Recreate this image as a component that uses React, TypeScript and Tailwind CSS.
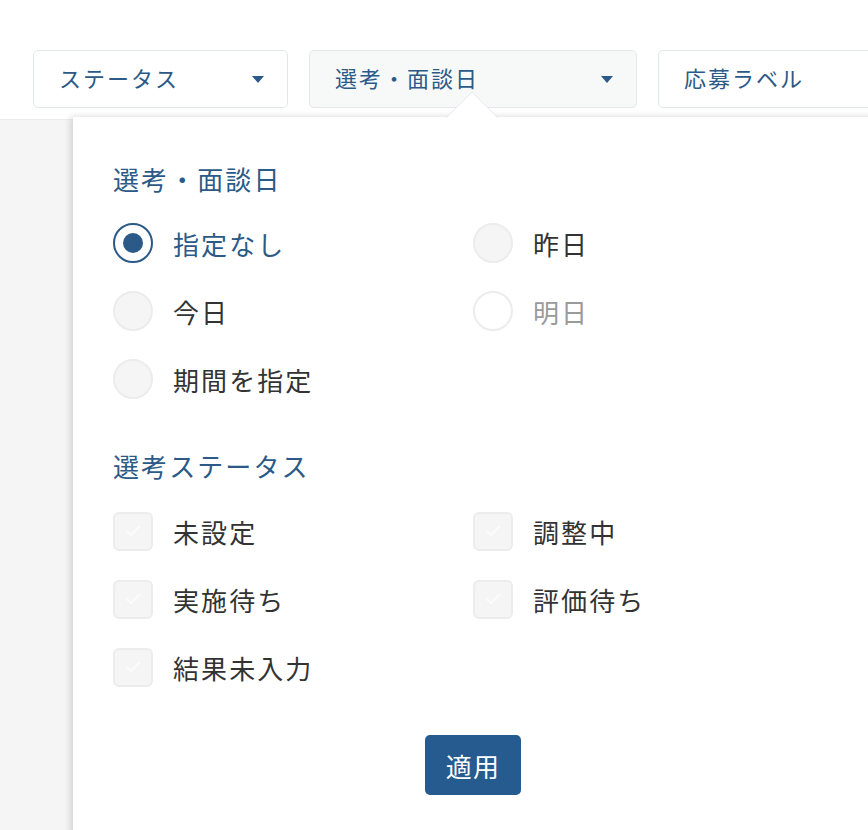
import { useState } from "react";

const FONT = { fontFamily: '"Noto Sans CJK JP", "Noto Sans", sans-serif' };

type Opt = { id: string; label: string; disabled?: boolean };

const dateOptions: Opt[] = [
  { id: "none", label: "指定なし" },
  { id: "yesterday", label: "昨日" },
  { id: "today", label: "今日" },
  { id: "tomorrow", label: "明日", disabled: true },
  { id: "range", label: "期間を指定" },
];

const statusOptions: Opt[] = [
  { id: "unset", label: "未設定" },
  { id: "adjusting", label: "調整中" },
  { id: "waiting", label: "実施待ち" },
  { id: "evaluating", label: "評価待ち" },
  { id: "noresult", label: "結果未入力" },
];

function Caret() {
  return (
    <svg width="12" height="7" viewBox="0 0 12 7" className="shrink-0">
      <polygon points="0,0 12,0 6,7" fill="#2b5a88" />
    </svg>
  );
}

function FilterButton({
  label,
  width,
  active,
  caret = true,
}: {
  label: string;
  width: string;
  active?: boolean;
  caret?: boolean;
}) {
  return (
    <button
      type="button"
      className={`flex h-[58px] shrink-0 items-center justify-between rounded-[5px] border border-[#e2e8ea] pb-[3px] pl-[25px] pr-[23px] text-[22px] tracking-[0.09em] text-[#2b5a88] ${width} ${
        active ? "bg-[#f7f8f8]" : "bg-white"
      }`}
    >
      <span>{label}</span>
      {caret && (
        <span className="pt-[3px]">
          <Caret />
        </span>
      )}
    </button>
  );
}

function Radio({
  opt,
  checked,
  onSelect,
}: {
  opt: Opt;
  checked: boolean;
  onSelect: () => void;
}) {
  const ring = checked
    ? "border-2 border-[#2b5a88] bg-white"
    : opt.disabled
    ? "border-2 border-[#ececec] bg-white"
    : "border-2 border-[#ececec] bg-[#f5f5f5]";
  const text = checked
    ? "text-[#2b5a88]"
    : opt.disabled
    ? "text-[#9a9a9a]"
    : "text-[#333333]";
  return (
    <label
      className="flex h-[40px] cursor-pointer items-center gap-[20px]"
      onClick={() => !opt.disabled && onSelect()}
    >
      <span
        className={`flex h-[40px] w-[40px] shrink-0 items-center justify-center rounded-full ${ring}`}
      >
        {checked && <span className="h-[20px] w-[20px] rounded-full bg-[#2b5a88]" />}
      </span>
      <span className={`text-[26px] tracking-[0.08em] ${text}`}>{opt.label}</span>
    </label>
  );
}

function Checkbox({
  opt,
  checked,
  onToggle,
}: {
  opt: Opt;
  checked: boolean;
  onToggle: () => void;
}) {
  return (
    <label className="flex h-[40px] cursor-pointer items-center gap-[20px]" onClick={onToggle}>
      <span
        className={`flex h-[39px] w-[40px] shrink-0 items-center justify-center rounded-[6px] border-2 ${
          checked ? "border-[#2b5a88] bg-[#2b5a88]" : "border-[#ececec] bg-[#f5f5f5]"
        }`}
      >
        <svg width="16" height="12" viewBox="0 0 16 12">
          <path
            d="M2 6.5 L6 10 L14 2"
            fill="none"
            stroke={checked ? "#ffffff" : "#fbfbfb"}
            strokeWidth="2.2"
            strokeLinecap="round"
            strokeLinejoin="round"
          />
        </svg>
      </span>
      <span className="text-[26px] tracking-[0.08em] text-[#333333]">{opt.label}</span>
    </label>
  );
}

export default function App() {
  const [date, setDate] = useState("none");
  const [statuses, setStatuses] = useState<string[]>([]);

  const toggle = (id: string) =>
    setStatuses((s) => (s.includes(id) ? s.filter((x) => x !== id) : [...s, id]));

  return (
    <div className="relative flex h-[830px] w-[868px] flex-col overflow-hidden bg-white" style={FONT}>
      {/* filter bar */}
      <div className="flex h-[119px] shrink-0 gap-[21px] pl-[33px] pt-[50px]">
        <FilterButton label="ステータス" width="w-[255px]" />
        <FilterButton label="選考・面談日" width="w-[328px]" active />
        <FilterButton label="応募ラベル" width="w-[260px]" caret={false} />
      </div>

      <div className="flex-1 border-t border-[#ebebeb] bg-[#f5f5f5]" />

      {/* date / status popover */}
      <div className="absolute bottom-[-20px] left-[73px] right-[-40px] top-[117px] bg-white pl-[40px] pt-[42px] shadow-[-2px_0_7px_rgba(0,0,0,0.16)]">
        <svg
          width="52"
          height="26"
          viewBox="0 0 52 26"
          className="absolute left-[373px] top-[-25px]"
        >
          <polygon points="0,26 26,0 52,26" fill="#ffffff" />
          <polyline points="0,26 26,0 52,26" fill="none" stroke="#e6e9ea" strokeWidth="1" />
        </svg>

        <h3 className="text-[26px] leading-[39px] tracking-[0.08em] text-[#2b5a88]">選考・面談日</h3>
        <div className="mt-[25px] grid grid-cols-[360px_360px] gap-y-[28px]">
          {dateOptions.map((o) => (
            <Radio key={o.id} opt={o} checked={date === o.id} onSelect={() => setDate(o.id)} />
          ))}
        </div>

        <h3 className="mt-[47px] text-[26px] leading-[39px] tracking-[0.08em] text-[#2b5a88]">
          選考ステータス
        </h3>
        <div className="mt-[26px] grid grid-cols-[360px_360px] gap-y-[28px]">
          {statusOptions.map((o) => (
            <Checkbox
              key={o.id}
              opt={o}
              checked={statuses.includes(o.id)}
              onToggle={() => toggle(o.id)}
            />
          ))}
        </div>

        <div className="mt-[48px] flex w-[720px] justify-center">
          <button
            type="button"
            className="h-[60px] w-[96px] rounded-[5px] bg-[#255b8f] text-[26px] tracking-[0.05em] text-white"
          >
            適用
          </button>
        </div>
      </div>
    </div>
  );
}
